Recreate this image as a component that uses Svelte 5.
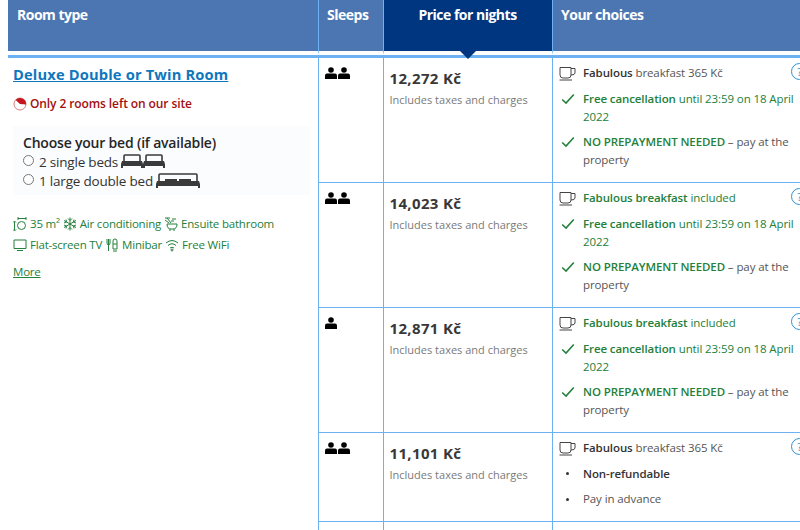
<script>
    const rows = [
        { guests: 2, price: '12,272 Kč', meal: 'paid', refundable: true },
        { guests: 2, price: '14,023 Kč', meal: 'included', refundable: true },
        { guests: 1, price: '12,871 Kč', meal: 'included', refundable: true },
        { guests: 2, price: '11,101 Kč', meal: 'paid', refundable: false }
    ];
</script>

{#snippet person()}
    <svg class="person" viewBox="0 0 12 12" width="12" height="12">
        <circle cx="6" cy="3" r="2.8" />
        <path d="M0 12 V8.5 Q0 6.6 2 6.6 H10 Q12 6.6 12 8.5 V12 Z" />
    </svg>
{/snippet}

{#snippet cup()}
    <svg class="cup" viewBox="0 0 17 15" width="17" height="15">
        <path d="M1 1.5 H12 V9 Q12 12 9 12 H4 Q1 12 1 9 Z M12 2.5 H16 V7 Q16 9 12 9 M0.5 14 H13" />
    </svg>
{/snippet}

{#snippet check()}
    <svg class="check" viewBox="0 0 14 12" width="14" height="12">
        <path d="M1.2 6.5 L5 10 L12.8 1.5" />
    </svg>
{/snippet}

<div class="page">
    <table>
        <thead>
            <tr>
                <th class="room">Room type</th>
                <th class="sleeps">Sleeps</th>
                <th class="price">Price for nights<span class="arrow"></span></th>
                <th class="choices">Your choices</th>
            </tr>
        </thead>
        <tbody>
            {#each rows as row, i}
                <tr>
                    {#if i == 0}
                        <td class="room" rowspan="5">
                            <a class="title" href="#room">Deluxe Double or Twin Room</a>
                            <p class="scarcity">
                                <svg viewBox="0 0 14 14" width="14" height="14">
                                    <circle cx="7" cy="7" r="6" fill="none" stroke="#d07f7f" stroke-width="1" />
                                    <path d="M7 7 L2.6 3 A6 6 0 0 1 13 7.5 Z" fill="#c4161c" />
                                </svg>
                                Only 2 rooms left on our site
                            </p>
                            <div class="beds">
                                <strong>Choose your bed (if available)</strong>
                                <label><input type="radio" name="bed" /> 2 single beds
                                    <svg class="bed" viewBox="0 0 44 15" width="44" height="15">
                                        <path d="M3 7 V2 Q3 1 4 1 H18 Q19 1 19 2 V7 M25 7 V2 Q25 1 26 1 H40 Q41 1 41 2 V7" fill="none" stroke="#3a3a3a" stroke-width="1.6" />
                                        <path d="M1 7 H21 L22 10 V14 H20 V12 H2 V14 H0 V10 Z M23 7 H43 L44 10 V14 H42 V12 H24 V14 H22 V10 Z" fill="#3a3a3a" />
                                    </svg>
                                </label>
                                <label><input type="radio" name="bed" /> 1 large double bed
                                    <svg class="bed" viewBox="0 0 44 16" width="44" height="16">
                                        <path d="M3 8 V2 Q3 1 4 1 H40 Q41 1 41 2 V8" fill="none" stroke="#3a3a3a" stroke-width="1.6" />
                                        <path d="M9 6 H21 V8 H9 Z M23 6 H35 V8 H23 Z" fill="#3a3a3a" />
                                        <path d="M1 8 H43 L44 11 V15 H42 V13 H2 V15 H0 V11 Z" fill="#3a3a3a" />
                                    </svg>
                                </label>
                            </div>
                            <div class="facilities">
                                <span>
                                    <svg viewBox="0 0 14 14" width="14" height="14"><circle cx="8.5" cy="8.5" r="4" /><path d="M5 1.5 H13 M5 0 V3 M13 0 V3 M1.5 5 V13 M0 5.5 L1.5 4 L3 5.5 M0 12.5 L1.5 14 L3 12.5" /></svg>
                                    35 m²
                                </span>
                                <span>
                                    <svg viewBox="0 0 14 14" width="14" height="14"><path d="M7 0.5 V13.5 M1 3.5 L13 10.5 M13 3.5 L1 10.5 M5 1.5 L7 3.5 L9 1.5 M5 12.5 L7 10.5 L9 12.5 M1 6 L3.5 5 L3 2.5 M13 6 L10.5 5 L11 2.5 M1 8 L3.5 9 L3 11.5 M13 8 L10.5 9 L11 11.5" /></svg>
                                    Air conditioning
                                </span>
                                <span>
                                    <svg viewBox="0 0 14 14" width="14" height="14"><path d="M1 1 L6 1 M1 3 L5 6 M3 1 L7 6 M3 7 H13 Q13 12 9 12 H7 Q3 12 3 7 Z M6 12 V14 M10 12 V14 M7 4 H10 M8 2 H12" /></svg>
                                    Ensuite bathroom
                                </span>
                                <span>
                                    <svg viewBox="0 0 14 14" width="14" height="14"><path d="M1 2 H13 V10.5 H1 Z M4 12.5 H10" /></svg>
                                    Flat-screen TV
                                </span>
                                <span>
                                    <svg viewBox="0 0 14 14" width="14" height="14"><path d="M2 1 V5 Q2 7 3.5 7 Q5 7 5 5 V1 M3.5 1 V13 M8 3 Q8 1 10 1 Q12 1 12 3 V11 H8 Z M8 6 H12 M8 13 H12" /></svg>
                                    Minibar
                                </span>
                                <span>
                                    <svg viewBox="0 0 14 14" width="14" height="14"><path d="M1 5 Q7 0 13 5 M3 7.5 Q7 4 11 7.5 M5 10 Q7 8.5 9 10" /><circle cx="7" cy="12" r="1" /></svg>
                                    Free WiFi
                                </span>
                            </div>
                            <a class="more" href="#more">More</a>
                        </td>
                    {/if}
                    <td class="sleeps">
                        <div class="people">
                            {#each Array(row.guests) as _}
                                {@render person()}
                            {/each}
                        </div>
                    </td>
                    <td class="price">
                        <div class="amount">{row.price}</div>
                        <div class="taxes">Includes taxes and charges</div>
                    </td>
                    <td class="choices">
                        <div class="help">?</div>
                        <ul>
                            <li>
                                <span class="mark">{@render cup()}</span>
                                {#if row.meal == 'paid'}
                                    <span><b>Fabulous</b> breakfast 365 Kč</span>
                                {:else}
                                    <span class="green"><b>Fabulous breakfast</b> included</span>
                                {/if}
                            </li>
                            {#if row.refundable}
                                <li>
                                    <span class="mark">{@render check()}</span>
                                    <span class="green"><b>Free cancellation</b> until 23:59 on 18 April 2022</span>
                                </li>
                                <li>
                                    <span class="mark">{@render check()}</span>
                                    <span><b class="green">NO PREPAYMENT NEEDED</b> – pay at the property</span>
                                </li>
                            {:else}
                                <li>
                                    <span class="mark"><i class="dot"></i></span>
                                    <b>Non-refundable</b>
                                </li>
                                <li>
                                    <span class="mark"><i class="dot"></i></span>
                                    <span>Pay in advance</span>
                                </li>
                            {/if}
                        </ul>
                    </td>
                </tr>
            {/each}
            <tr class="stub">
                <td class="sleeps"></td>
                <td class="price"></td>
                <td class="choices"></td>
            </tr>
        </tbody>
    </table>
</div>

<style>
    :global(body) {
        margin: 0;
        background: #fff;
        overflow: hidden;
    }

    .page {
        width: 800px;
        height: 530px;
        overflow: hidden;
        padding-left: 8px;
        box-sizing: border-box;
        font-family: "Open Sans", "Noto Sans", sans-serif;
        font-size: 12px;
        color: #333;
    }

    table {
        width: 810px;
        table-layout: fixed;
        border-collapse: separate;
        border-spacing: 0;
    }

    th.room, td.room { width: 310px; }
    th.sleeps, td.sleeps { width: 65px; }
    th.price, td.price { width: 169px; }

    thead th {
        position: relative;
        height: 55px;
        padding: 5px 9px 0 8px;
        box-sizing: border-box;
        vertical-align: top;
        text-align: left;
        background: #4c76b2;
        color: #fff;
        font-size: 14px;
        font-weight: 700;
        line-height: 19px;
        letter-spacing: -0.5px;
        border-bottom: 4px solid #fff;
    }

    thead th.room { padding-left: 9px; }

    thead th + th {
        border-left: 1px solid #6cb2f2;
    }

    thead th.price {
        background: #003580;
        text-align: center;
    }

    .arrow {
        position: absolute;
        left: 50%;
        bottom: -8px;
        margin-left: -8px;
        border: 8px solid transparent;
        border-top-color: #003580;
        border-bottom: 0;
        z-index: 1;
    }

    tbody td {
        vertical-align: top;
        border-left: 1px solid #6cb2f2;
        border-bottom: 1px solid #6cb2f2;
        padding: 0;
        box-sizing: border-box;
    }

    tbody tr:first-child td {
        border-top: 3px solid #6cb2f2;
    }

    tbody td.room {
        border-left: 0;
        border-bottom: 0;
        padding: 6px 5px 0;
    }

    .title {
        font-size: 14.7px;
        font-weight: 700;
        color: #0f77bd;
        letter-spacing: 0.15px;
        line-height: 20px;
    }

    .scarcity {
        display: flex;
        align-items: center;
        gap: 3px;
        margin: 11px 0 0;
        color: #a30f0f;
        font-weight: 600;
        font-size: 12px;
        line-height: 18px;
        letter-spacing: -0.1px;
    }

    .beds {
        display: flex;
        flex-direction: column;
        margin: 13px 3px 0 0;
        padding: 7px 10px 4px;
        background: #fafcfe;
        font-size: 13.5px;
        letter-spacing: -0.2px;
        height: 69px;
        box-sizing: border-box;
    }

    .beds strong {
        font-weight: 600;
        font-size: 14px;
        line-height: 19px;
        color: #262626;
    }

    .beds label {
        display: flex;
        align-items: center;
        gap: 4px;
        height: 20px;
        white-space: nowrap;
    }

    .beds input {
        width: 11px;
        height: 11px;
        margin: 0 1px 3px 0;
    }

    .bed {
        margin-left: -1px;
    }

    .facilities {
        display: flex;
        flex-wrap: wrap;
        align-items: center;
        column-gap: 3px;
        row-gap: 3px;
        margin-top: 20px;
        width: 270px;
        color: #24803a;
        font-size: 11.5px;
        line-height: 18px;
        letter-spacing: -0.2px;
    }

    .facilities span {
        display: flex;
        align-items: center;
        gap: 3px;
        white-space: nowrap;
    }

    .facilities svg {
        fill: none;
        stroke: #24803a;
        stroke-width: 1;
    }

    .more {
        display: block;
        margin-top: 9px;
        color: #24803a;
        font-size: 11.5px;
        line-height: 18px;
        letter-spacing: -0.2px;
    }

    .people {
        display: flex;
        gap: 1px;
        padding: 9px 0 0 6px;
    }

    .person {
        fill: #000;
    }

    .price .amount {
        padding: 11px 0 0 5.5px;
        font-size: 15px;
        font-weight: 700;
        line-height: 19px;
        color: #383838;
        letter-spacing: 0.35px;
    }

    .price .taxes {
        padding: 4px 0 0 5.5px;
        font-size: 11px;
        line-height: 16px;
        color: #7a7a7a;
        white-space: nowrap;
    }

    td.choices {
        position: relative;
    }

    .help {
        position: absolute;
        top: 5px;
        left: 238px;
        width: 15px;
        height: 15px;
        border: 1px solid #2f8fd0;
        border-radius: 50%;
        color: #2f8fd0;
        font-size: 11px;
        line-height: 15px;
        text-align: center;
    }

    ul {
        list-style: none;
        margin: 0;
        padding: 6px 0 13px 6px;
        width: 240px;
        display: flex;
        flex-direction: column;
        gap: 7.5px;
    }

    li {
        display: flex;
        gap: 7px;
        font-size: 11.5px;
        line-height: 18px;
        color: #555;
        letter-spacing: -0.1px;
    }

    li b {
        color: #333;
        font-weight: 600;
    }

    .mark {
        flex: 0 0 17px;
        height: 18px;
        display: flex;
        align-items: center;
        justify-content: center;
    }

    .cup {
        fill: none;
        stroke: #444;
        stroke-width: 1;
    }

    .check {
        fill: none;
        stroke: #24803a;
        stroke-width: 1.6;
    }

    .dot {
        width: 3px;
        height: 3px;
        border-radius: 50%;
        background: #333;
    }

    .green, .green b, li b.green {
        color: #24803a;
    }

    .stub td {
        height: 20px;
        border-bottom: 0;
    }
</style>
